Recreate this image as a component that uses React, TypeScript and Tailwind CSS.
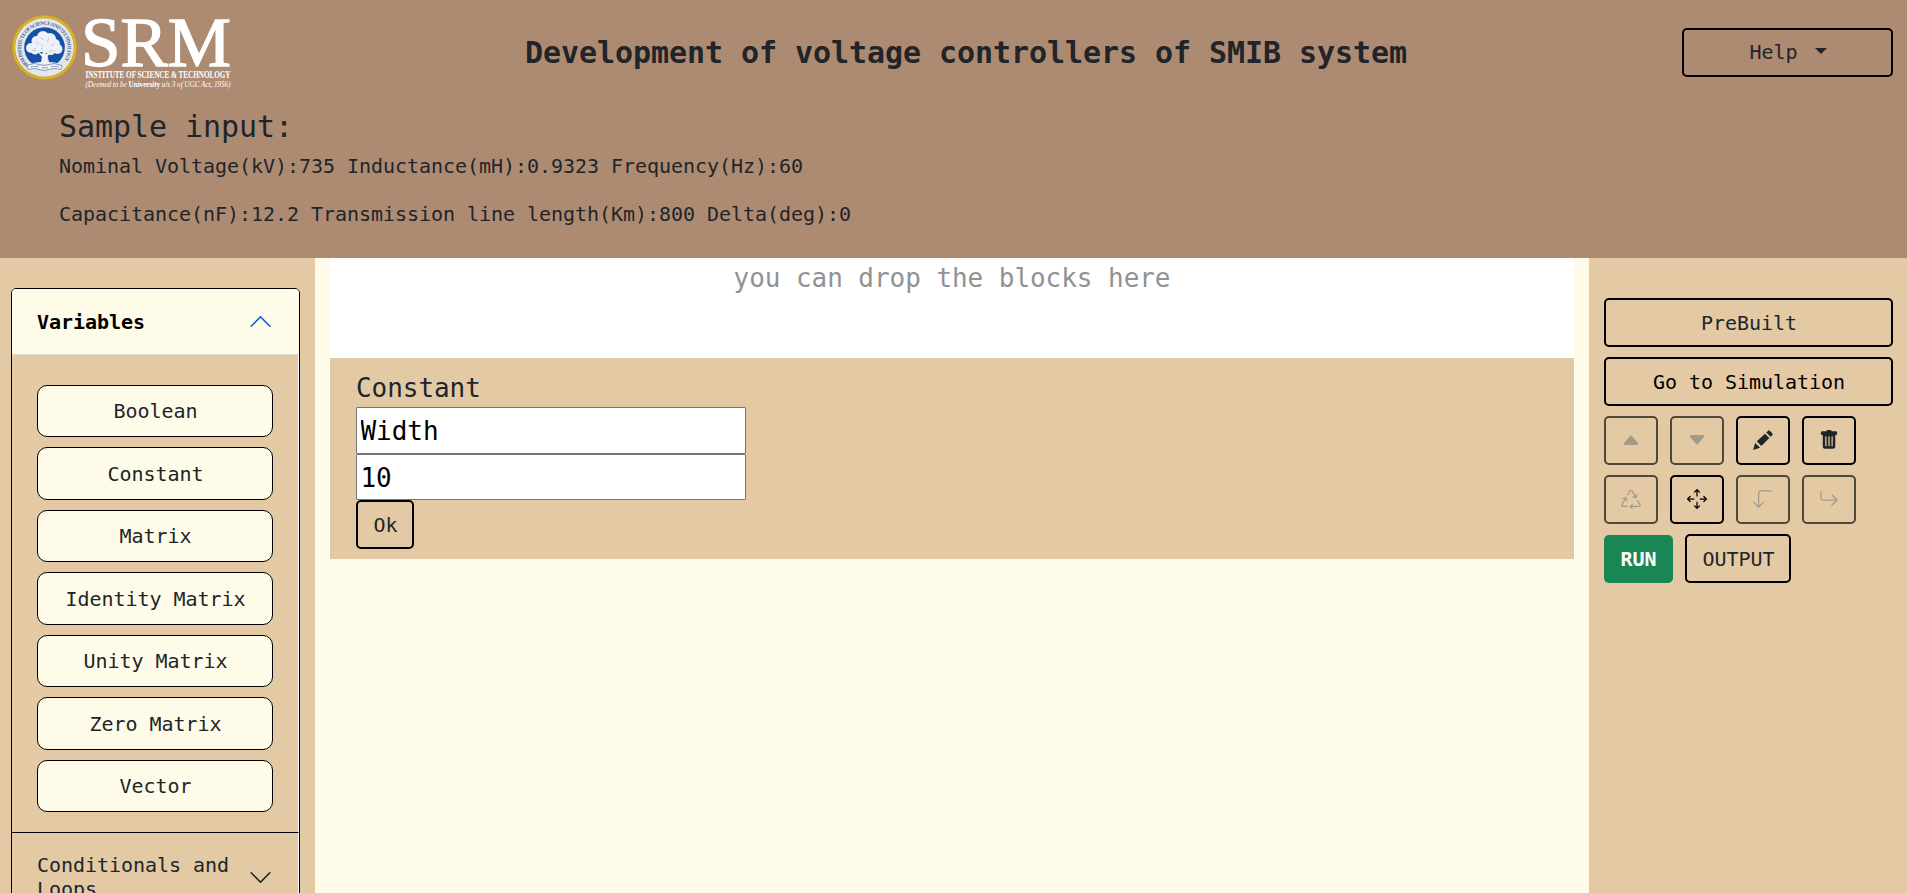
import type { ReactNode } from 'react'
import {
  BsArrow90DegDown,
  BsArrowReturnRight,
  BsArrowsMove,
  BsCaretDownFill,
  BsCaretUpFill,
  BsRecycle,
  BsTrashFill,
} from 'react-icons/bs'

const variables = ['Boolean', 'Constant', 'Matrix', 'Identity Matrix', 'Unity Matrix', 'Zero Matrix', 'Vector']

function Logo() {
  return (
    <svg width="236" height="95" viewBox="0 0 236 95" className="block shrink-0" fontFamily="'Liberation Serif', serif">
      <circle cx="44.5" cy="47.5" r="32.5" fill="#c9a21c" />
      <circle cx="44.5" cy="47.5" r="30.8" fill="none" stroke="#e6cc55" strokeWidth="0.8" />
      <circle cx="44.5" cy="47.5" r="29.3" fill="#e4e6ea" />
      <defs>
        <path id="ring" d="M29 65.500A23.300 23.300 0 1 1 60 65.500" />
        <clipPath id="disc">
          <circle cx="44.5" cy="47.5" r="20.5" />
        </clipPath>
      </defs>
      <text fontSize="5.2" fontWeight="bold" fill="#47659b" textLength="105">
        <textPath href="#ring">SRM INSTITUTE OF SCIENCE AND TECHNOLOGY</textPath>
      </text>
      <circle cx="44.5" cy="47.5" r="20.3" fill="#1450a5" />
      <g clipPath="url(#disc)">
        <path d="M24 66q10-4 17-4l1.500-8h4.500l2 8q8 0 16 4v8H24z" fill="#e4e6ea" />
      </g>
      <g fill="#eef2f8">
        <circle cx="43" cy="37" r="6" />
        <circle cx="36.500" cy="41" r="5" />
        <circle cx="50" cy="39" r="6" />
        <circle cx="31" cy="48" r="5" />
        <circle cx="38" cy="47" r="6" />
        <circle cx="46" cy="46" r="7" />
        <circle cx="55" cy="44" r="5" />
        <circle cx="57.500" cy="49" r="5" />
        <circle cx="51" cy="51" r="4" />
        <circle cx="35" cy="51" r="3.500" />
        <path d="M37 51l5 6v5l-4 2h13l-4-2v-5l5-6-6 3-2-4-2 4z" />
      </g>
      <path d="M36 42l3 2m2-7l2 3m6-2l-2 4m7 2l-3 2m-19 4l4 1m5-3l2 2m9 0l-3 2m-8-8l2 2m10 6l2-2m-21-1l2-1" stroke="#9db6da" strokeWidth="0.7" fill="none" />
      <path d="M27 65.500l7-2 10 2 10-2 8 2-1 4-7-1-10 2-9-2-7 1z" fill="#f0f2f4" stroke="#7189b1" strokeWidth="0.8" />
      <path d="M31 66.800l8-.5m3 1.500h6m3-1.500l8 .5" stroke="#7189b1" strokeWidth="1" strokeDasharray="1.500 .6" />
      <g fill="#ffffff">
        <text x="81" y="66" fontSize="70.500" textLength="150" lengthAdjust="spacingAndGlyphs" stroke="#ffffff" strokeWidth="1.300">SRM</text>
        <text x="85.500" y="78.300" fontSize="10" fontWeight="bold" textLength="145" lengthAdjust="spacingAndGlyphs">INSTITUTE OF SCIENCE &amp; TECHNOLOGY</text>
        <text x="85.500" y="87" fontSize="7.400" fontStyle="italic" textLength="145" lengthAdjust="spacingAndGlyphs">
          (Deemed to be <tspan fontWeight="bold" fontStyle="normal">University</tspan> u/s 3 of UGC Act, 1956)
        </text>
      </g>
    </svg>
  )
}

function Chevron({ className }: { className: string }) {
  return (
    <svg viewBox="0 0 16 16" className={`size-[25px] shrink-0 ${className}`} fill="currentColor">
      <path fillRule="evenodd" d="M1.646 4.646a.5.5 0 0 1 .708 0L8 10.293l5.646-5.647a.5.5 0 0 1 .708.708l-6 6a.5.5 0 0 1-.708 0l-6-6a.5.5 0 0 1 0-.708z" />
    </svg>
  )
}

function Pencil() {
  return (
    <svg width="20" height="20" viewBox="0 0 20 20" fill="currentColor">
      <path d="M0 20l2.200-7.100 4.900 4.900z" />
      <path d="M3.800 11.200l8.200-7.500 4.300 4.300-8 8.100z" />
      <path d="M13.300 2.600L15.200.7q.8-.7 1.500 0l2.700 2.700q.6.800 0 1.500l-1.800 1.900z" />
    </svg>
  )
}

function OutlineButton({ children, className = '' }: { children: ReactNode; className?: string }) {
  return (
    <button className={`flex h-[49px] items-center justify-center rounded-[5px] border-2 border-black pl-px ${className}`}>
      {children}
    </button>
  )
}

function IconButton({ children, disabled = false }: { children: ReactNode; disabled?: boolean }) {
  return (
    <button
      disabled={disabled}
      className={`flex h-[49px] w-[54px] items-center justify-center rounded-[5px] border-2 pb-px text-[20px] ${
        disabled ? 'border-[#4f473a] text-[#a39a8b]' : 'border-black text-[#212529]'
      }`}
    >
      {children}
    </button>
  )
}

export default function App() {
  return (
    <div className="flex h-[893px] w-full flex-col overflow-hidden bg-[#fffbe9] font-['DejaVu_Sans_Mono',monospace] text-[20px] leading-[30px] tracking-[-0.04px] text-[#212529]">
      <header className="h-[258px] shrink-0 bg-[#ad8b73]">
        <div className="flex h-[105px] items-start">
          <Logo />
          <h1 className="ml-[289px] mt-[33px] whitespace-pre text-[30px] font-bold leading-[40px] tracking-[-0.06px]">
            Development of voltage controllers of SMIB system
          </h1>
          <OutlineButton className="ml-auto mr-[14px] mt-7 w-[211px] gap-[17px] pb-px">
            <span>Help</span>
            <span className="mb-[3px] h-0 w-0 border-x-[6px] border-t-[6px] border-x-transparent border-t-[#212529]" />
          </OutlineButton>
        </div>
        <div className="pl-[59px]">
          <h2 className="pt-[2px] text-[30px] leading-[40px] tracking-[-0.06px]">Sample input:</h2>
          <p className="mt-[4px]">Nominal Voltage(kV):735 Inductance(mH):0.9323 Frequency(Hz):60</p>
          <p className="mt-[18px]">Capacitance(nF):12.2 Transmission line length(Km):800 Delta(deg):0</p>
        </div>
      </header>

      <div className="flex min-h-0 flex-1">
        <aside className="w-[315px] shrink-0 overflow-hidden bg-[#e3caa5] pl-[11px] pt-[30px]">
          <div className="w-[289px] rounded-t-[5px] border border-black">
            <div className="flex h-[66px] items-center justify-between rounded-t-[4px] border-b border-[#dfdccd] bg-[#fffbe9] pl-[25px] pr-[26px] font-bold text-black">
              <span>Variables</span>
              <Chevron className="rotate-180 text-[#0c63e4]" />
            </div>
            <div className="flex h-[477px] flex-col gap-[10px] border-r border-white pl-[25px] pr-[25px] pt-[29.8px]">
              {variables.map((name) => (
                <button key={name} className="h-[52.5px] w-[236px] shrink-0 rounded-[10px] border border-black bg-[#fffbe9] pl-px">
                  {name}
                </button>
              ))}
            </div>
            <div className="flex h-[90px] items-center justify-between border-r border-t border-r-white border-t-black pl-[25px] pr-[25px] leading-[24px]">
              <span className="mb-[2px] w-[200px]">Conditionals and Loops</span>
              <Chevron className="" />
            </div>
          </div>
        </aside>

        <main className="min-w-0 flex-1 px-[15px]">
          <div className="h-[100px] bg-white pt-[4px] text-center text-[26px] leading-[32px] tracking-[-0.05px] text-[#909294]">
            you can drop the blocks here
          </div>
          <div className="h-[201px] bg-[#e3caa5] pl-[26px] pt-[10px]">
            <label className="block h-[39px] pt-px text-[26px] leading-[39px] tracking-[-0.05px]">Constant</label>
            <input
              defaultValue="Width"
              className="block h-[46.5px] w-[390px] rounded-[1px] border border-[#767676] bg-white pl-[3.5px] pt-[2px] text-[26px] tracking-[-0.05px] text-black"
            />
            <input
              defaultValue="10"
              className="block h-[46.5px] w-[390px] rounded-[1px] border border-[#767676] bg-white pl-[3.5px] pt-[2px] text-[26px] tracking-[-0.05px] text-black"
            />
            <OutlineButton className="w-[58px] pt-px">Ok</OutlineButton>
          </div>
        </main>

        <aside className="flex w-[318px] shrink-0 flex-col gap-[10px] bg-[#e3caa5] pl-[15px] pr-[14px] pt-10">
          <OutlineButton className="pt-px">PreBuilt</OutlineButton>
          <OutlineButton className="pt-px text-black">Go to Simulation</OutlineButton>
          <div className="flex gap-3">
            <IconButton disabled><BsCaretUpFill /></IconButton>
            <IconButton disabled><BsCaretDownFill /></IconButton>
            <IconButton><Pencil /></IconButton>
            <IconButton><BsTrashFill /></IconButton>
          </div>
          <div className="flex gap-3">
            <IconButton disabled><BsRecycle /></IconButton>
            <IconButton><BsArrowsMove className="text-black" /></IconButton>
            <IconButton disabled><BsArrow90DegDown /></IconButton>
            <IconButton disabled><BsArrowReturnRight /></IconButton>
          </div>
          <div className="flex items-end gap-3">
            <button className="h-[48px] w-[69px] rounded-[5px] bg-[#198754] pb-px font-bold text-white">RUN</button>
            <OutlineButton className="w-[106px] pt-px">OUTPUT</OutlineButton>
          </div>
        </aside>
      </div>
    </div>
  )
}
